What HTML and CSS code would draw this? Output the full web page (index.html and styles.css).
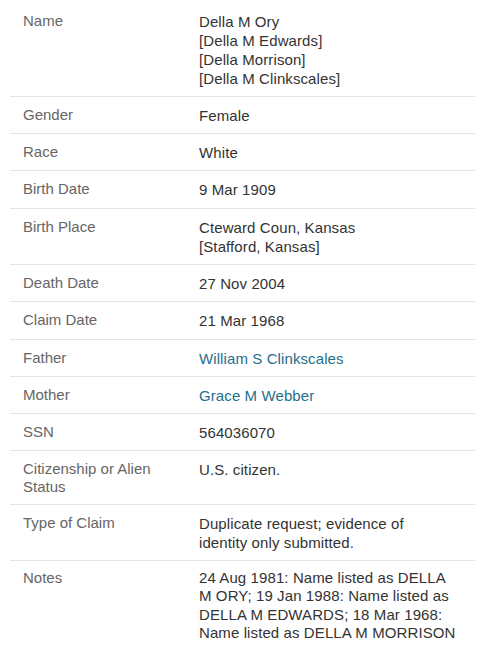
FILE: index.html
```html
<!DOCTYPE html>
<html lang="en">
<head>
<meta charset="utf-8">
<title>Record</title>
<link rel="stylesheet" href="styles.css">
</head>
<body>
<dl class="record">
  <div class="row">
    <dt class="label">Name</dt>
    <dd class="value">Della M Ory<br>[Della M Edwards]<br>[Della Morrison]<br>[Della M Clinkscales]</dd>
  </div>
  <div class="row">
    <dt class="label">Gender</dt>
    <dd class="value">Female</dd>
  </div>
  <div class="row">
    <dt class="label">Race</dt>
    <dd class="value">White</dd>
  </div>
  <div class="row">
    <dt class="label">Birth Date</dt>
    <dd class="value">9 Mar 1909</dd>
  </div>
  <div class="row">
    <dt class="label">Birth Place</dt>
    <dd class="value">Cteward Coun, Kansas<br>[Stafford, Kansas]</dd>
  </div>
  <div class="row">
    <dt class="label">Death Date</dt>
    <dd class="value">27 Nov 2004</dd>
  </div>
  <div class="row">
    <dt class="label">Claim Date</dt>
    <dd class="value">21 Mar 1968</dd>
  </div>
  <div class="row">
    <dt class="label">Father</dt>
    <dd class="value"><a class="link" href="#">William S Clinkscales</a></dd>
  </div>
  <div class="row">
    <dt class="label">Mother</dt>
    <dd class="value"><a class="link" href="#">Grace M Webber</a></dd>
  </div>
  <div class="row">
    <dt class="label">SSN</dt>
    <dd class="value">564036070</dd>
  </div>
  <div class="row">
    <dt class="label">Citizenship or Alien Status</dt>
    <dd class="value">U.S. citizen.</dd>
  </div>
  <div class="row">
    <dt class="label">Type of Claim</dt>
    <dd class="value">Duplicate request; evidence of<br>identity only submitted.</dd>
  </div>
  <div class="row last">
    <dt class="label">Notes</dt>
    <dd class="value notes">24 Aug 1981: Name listed as DELLA M ORY; 19 Jan 1988: Name listed as DELLA M EDWARDS; 18 Mar 1968: Name listed as DELLA M MORRISON</dd>
  </div>
</dl>
</body>
</html>
```

FILE: styles.css
```css
html, body {
  margin: 0;
  padding: 0;
  background: #ffffff;
}

body {
  font-family: "Liberation Sans", Arial, Helvetica, sans-serif;
  font-size: 15px;
  color: #333333;
}

.record {
  margin: 0 0 0 10px;
  padding: 2.5px 0 0;
  width: 465px;
}

.row {
  display: grid;
  grid-template-columns: 163px 258px;
  column-gap: 13px;
  align-items: start;
  padding: 9px 0 8.3px 13px;
  border-bottom: 1px solid #e4e4e4;
}

.row.last {
  border-bottom: none;
  padding-top: 8px;
}

.label {
  margin: 0;
  color: #666666;
  line-height: 17.4px;
}

.value {
  margin: 0;
  color: #333333;
  line-height: 19px;
  letter-spacing: 0.1px;
}

.value.notes {
  line-height: 18.4px;
}

.link {
  color: #1f6e8c;
  text-decoration: none;
}
```
